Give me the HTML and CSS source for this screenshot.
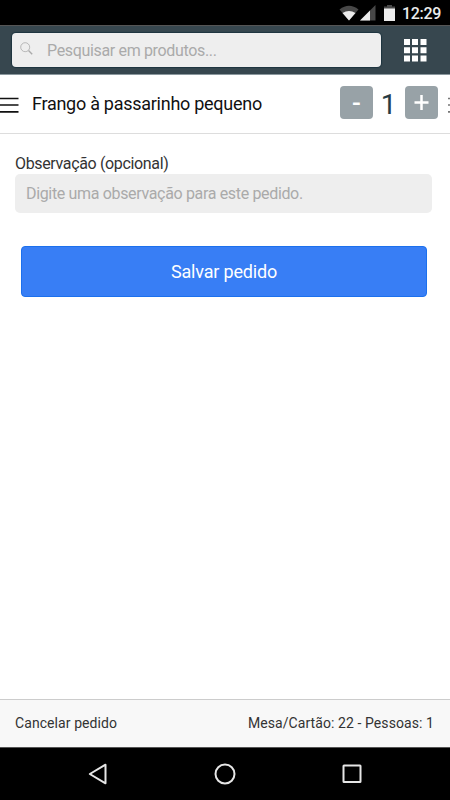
FILE: index.html
```
<!DOCTYPE html>
<html lang="pt-BR">
<head>
    <meta charset="UTF-8">
    <meta name="viewport" content="width=device-width, initial-scale=1.0">
    <title>Pedido</title>
    <link rel="stylesheet" href="styles.css">
</head>
<body>
    <div class="status-bar">
        <svg class="wifi" width="20" height="16" viewBox="0 0 20 16">
            <path d="M0.5 4.5Q10 -3 19.5 4.5L10 15.5Z" fill="#484848"/>
            <path d="M3.5 8Q10 3.8 16.5 8L10 15.5Z" fill="#ececec"/>
        </svg>
        <svg class="signal" width="16" height="16" viewBox="0 0 16 16">
            <path d="M0 15.5L15.5 0V15.5Z" fill="#484848"/>
            <path d="M0 15.5L10 5.5V15.5Z" fill="#ececec"/>
        </svg>
        <svg class="battery" width="11" height="16" viewBox="0 0 11 16">
            <path d="M0 1.5H3V0H8V1.5H11V4H0Z" fill="#484848"/>
            <path d="M0 3.5H11V16H0Z" fill="#ececec"/>
        </svg>
        <span class="clock">12:29</span>
    </div>

    <header class="header">
        <div class="search">
            <svg width="13" height="13" viewBox="0 0 13 13" fill="none" stroke="#aaa">
                <circle cx="5.2" cy="5.2" r="4.5" stroke-width="0.8"/>
                <path d="M8.5 8.5L12.2 12.2" stroke-width="1.4"/>
            </svg>
            <input type="text" class="search-input" placeholder="Pesquisar em produtos...">
        </div>
        <svg class="grid-icon" width="23" height="23" viewBox="0 0 23 23" fill="#fff">
            <path d="M0 0h6v6H0zM8 0h6v6H8zM16.500 0h6v6h-6zM0 8.300h6v6H0zM8 8.300h6v6H8zM16.500 8.300h6v6h-6zM0 16.500h6v6H0zM8 16.500h6v6H8zM16.500 16.500h6v6h-6z"/>
        </svg>
    </header>

    <div class="item">
        <svg class="menu" width="19" height="17" viewBox="0 0 19 17">
            <path d="M0 1.500H18.500M0 8H18.500M0 14.800H18.500" stroke="#111" stroke-width="1.700"/>
        </svg>
        <span class="item-name">Frango à passarinho pequeno</span>
        <button class="step" aria-label="Menos">
            <span>-</span>
        </button>
        <span class="quantity">1</span>
        <button class="step plus" aria-label="Mais">
            <svg width="15" height="15" viewBox="0 0 15 15">
                <path d="M0.500 7.500H14.500M7.500 0V15" stroke="#fff" stroke-width="2.500"/>
            </svg>
        </button>
        <svg class="next-menu" width="3" height="17" viewBox="0 0 3 17">
            <path d="M1 1.500H3M1 8H3M1 14.800H3" stroke="#777" stroke-width="1.700"/>
        </svg>
    </div>

    <main class="content">
        <label class="label" for="note">Observação (opcional)</label>
        <input type="text" id="note" class="note" placeholder="Digite uma observação para este pedido.">
        <button class="save">Salvar pedido</button>
    </main>

    <footer class="footer">
        <span class="cancel">Cancelar pedido</span>
        <span class="table">Mesa/Cartão: 22 - Pessoas: 1</span>
    </footer>

    <nav class="nav-bar">
        <svg width="20" height="22" viewBox="0 0 20 22" fill="none" stroke="#e6e6e6" stroke-width="2">
            <path d="M1.800 11L17.500 1.700V20.300Z" stroke-linejoin="round"/>
        </svg>
        <svg width="22" height="22" viewBox="0 0 22 22" fill="none" stroke="#e6e6e6" stroke-width="2">
            <circle cx="11" cy="11" r="9.500"/>
        </svg>
        <svg width="20" height="20" viewBox="0 0 20 20" fill="none" stroke="#e6e6e6" stroke-width="2">
            <rect x="1.500" y="1.500" width="17" height="16.500" rx="0.500"/>
        </svg>
    </nav>
</body>
</html>
```

FILE: styles.css
```
* {
    box-sizing: border-box;
}

body {
    margin: 0;
    height: 800px;
    display: flex;
    flex-direction: column;
    overflow: hidden;
    background-color: #fff;
    color: #222;
    font-family: Roboto, sans-serif;
}

svg {
    display: block;
    flex: none;
}

input, button {
    border: none;
    margin: 0;
    padding: 0;
    font-family: inherit;
}

.status-bar {
    height: 25px;
    flex: none;
    background-color: #000;
    display: flex;
    align-items: flex-start;
    justify-content: flex-end;
    padding: 5px 9px 0 0;
}

.signal {
    margin-left: 1px;
}

.battery {
    margin-left: 8px;
}

.clock {
    margin-left: 7px;
    width: 39px;
    color: #ececec;
    font-size: 16px;
    font-weight: 500;
    letter-spacing: -0.3px;
    line-height: 18px;
    white-space: nowrap;
}

.header {
    height: 50px;
    flex: none;
    background-color: #37474f;
    border-top: 1px solid #555;
    border-bottom: 1px solid #8b989e;
    display: flex;
    align-items: flex-start;
    padding: 7px 23px 0 12px;
}

.search {
    width: 369px;
    height: 34px;
    background-color: #eee;
    border-radius: 4px;
    box-shadow: 0 0 1px 1px #1d343f;
    display: flex;
    align-items: center;
    padding: 0 8px;
}

.search svg {
    margin-bottom: 4px;
}

.search-input {
    flex: 1;
    margin-left: 14px;
    background-color: transparent;
    font-size: 16px;
    letter-spacing: -0.34px;
}

.search-input::placeholder, .note::placeholder {
    color: #aaa;
    opacity: 1;
}

.grid-icon {
    margin: 6px 0 0 23px;
}

.item {
    height: 59px;
    flex: none;
    border-bottom: 1px solid #ddd;
    display: flex;
    align-items: center;
}

.menu {
    margin-top: 2px;
}

.item-name {
    flex: 1;
    margin-left: 13px;
    padding-bottom: 2px;
    color: #111;
    font-size: 18px;
    letter-spacing: -0.27px;
    white-space: nowrap;
}

.step {
    width: 33px;
    height: 33px;
    margin-bottom: 3px;
    background-color: #98a2a7;
    border-radius: 4px;
    color: #fff;
    display: flex;
    align-items: center;
    justify-content: center;
    font-size: 26px;
    font-weight: 500;
}

.quantity {
    width: 32px;
    padding-right: 1px;
    color: #263b45;
    font-size: 28px;
    text-align: center;
}

.next-menu {
    width: 3px;
    margin: 3px 0 0 9px;
}

.content {
    flex: 1;
    padding: 19px 18px 0 15px;
    display: flex;
    flex-direction: column;
}

.label {
    color: #333;
    font-size: 16px;
    letter-spacing: -0.35px;
    line-height: 21px;
}

.note {
    height: 39px;
    padding: 0 11px 1px;
    background-color: #eee;
    border-radius: 5px;
    font-size: 16px;
    letter-spacing: -0.34px;
}

.save {
    height: 51px;
    margin: 33px 5px 0 6px;
    background-color: #387ef5;
    border: 1px solid #1c70ed;
    border-radius: 4px;
    color: #fff;
    font-size: 18px;
    letter-spacing: -0.17px;
}

.footer {
    height: 49px;
    flex: none;
    background-color: #f8f8f8;
    border-top: 1px solid #ccc;
    border-bottom: 1px solid #555;
    display: flex;
    align-items: center;
    justify-content: space-between;
    padding: 0 16px 1px 15px;
    color: #333;
    font-size: 14px;
    letter-spacing: 0.08px;
}

.nav-bar {
    height: 52px;
    flex: none;
    background-color: #000;
    display: flex;
    align-items: center;
    justify-content: space-between;
    padding: 0 88px;
}
```
